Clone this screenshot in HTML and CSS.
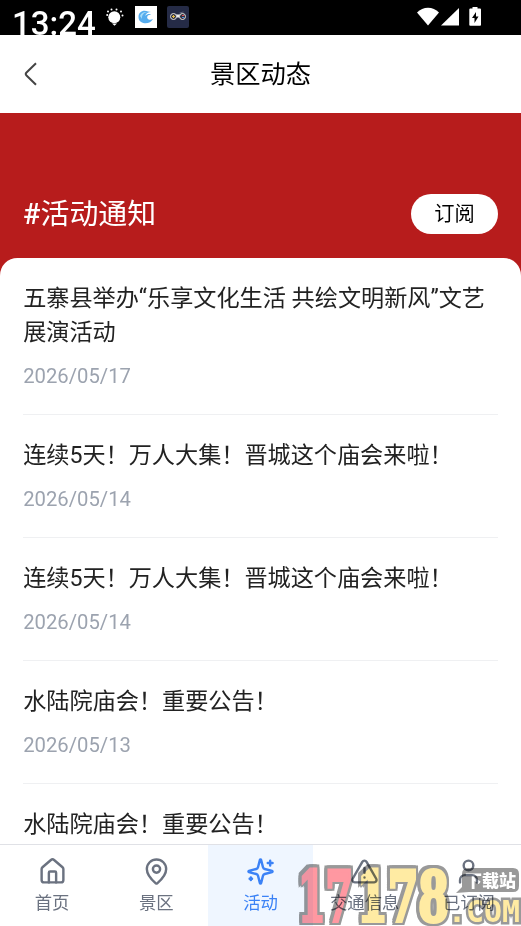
FILE: index.html
```html
<!DOCTYPE html>
<html lang="zh-CN">
<head>
<meta charset="utf-8">
<title>景区动态</title>
<link rel="stylesheet" href="styles.css">
</head>
<body>
<div class="app">
  <div class="status">
    <span class="clock">13:24</span>
    <svg class="bulb" viewBox="0 0 18 18" fill="#fff"><circle cx="8.300" cy="9.200" r="6"/><path d="M6 15.500h5l-2.500 2.300z"/><circle cx="1.200" cy="7" r="1"/><circle cx="2" cy="3.500" r="1"/><circle cx="5.500" cy="1.500" r="1"/><circle cx="10.500" cy="1.500" r="1"/><circle cx="15" cy="3.500" r="1"/><circle cx="16.500" cy="7.500" r="1"/></svg>
    <svg class="wave" viewBox="0 0 22 22"><path fill="#fff" d="M0 0h22v22H0z"/><path d="M3.500 11C3.500 6 8 3.500 13 5.500L16 6c-3 0-5 1.500-6 4 2-2 4.500-2.500 6-1.500-3 .2-4.500 2-3.500 4 1 1.600 3.500 1.700 5.500.5-1.500 3-5 4.700-8.500 4.300C6 16.800 3.500 14.500 3.500 11z" fill="#55acee"/><path d="M5 10c1-3 4-4.500 7-4-4 1-5.500 4-5 7" fill="#a6dbf7"/></svg>
    <svg class="game" viewBox="0 0 22 22"><rect width="22" height="22" rx="2" fill="#252b46"/><path d="M8 10h6" stroke="#eee" stroke-width="3"/><circle cx="6.500" cy="10.500" r="3" fill="#30303d" stroke="#e4e1df"/><circle cx="15.500" cy="10.500" r="3" fill="#30303d" stroke="#e4e1df"/><path d="M5 10.500h3M6.500 9v3" stroke="#e5bd48"/><path d="M15 9.500h2" stroke="#e4515d"/><path d="M15 11.500h2" stroke="#508de0"/><path d="M12.500 7l4-1" stroke="#777b92" stroke-width=".7"/></svg>
    <svg class="signals" viewBox="0 0 66 20" fill="#fff"><path d="M0 5.500C6-1 16-1 22 5.500L11 18.500z"/><path d="M42 1v17.500H24z"/><path fill-rule="evenodd" d="M55.500 0h5v1.500H63q1 0 1 1V18q0 .8-1 .8H53.300q-1 0-1-.8V2.500q0-1 1-1h2.200zM59 5l-4 6h2.500v5l4-6.500H59z"/></svg>
  </div>
  <header class="topbar">
    <svg class="back" viewBox="0 0 14 24"><path d="M12 1.200L2.500 10.500Q1 12 2.500 13.500L12 22.800"/></svg>
    <h1>景区动态</h1>
  </header>
  <section class="hero">
    <h2><b>#</b>活动通知</h2>
    <button class="subscribe">订阅</button>
  </section>
  <main class="list">
    <article><h3>五寨县举办“乐享文化生活 共绘文明新风”文艺展演活动</h3><time>2026/05/17</time></article>
    <article><h3>连续5天！万人大集！晋城这个庙会来啦！</h3><time>2026/05/14</time></article>
    <article><h3>连续5天！万人大集！晋城这个庙会来啦！</h3><time>2026/05/14</time></article>
    <article><h3>水陆院庙会！重要公告！</h3><time>2026/05/13</time></article>
    <article><h3>水陆院庙会！重要公告！</h3></article>
  </main>
  <nav class="tabs">
    <a class="tab"><svg viewBox="0 0 24 24"><path d="M3 10a2 2 0 0 1 .7-1.500l7-6a2 2 0 0 1 2.600 0l7 6A2 2 0 0 1 21 10v9a2 2 0 0 1-2 2H5a2 2 0 0 1-2-2z"/><path d="M15 21v-8a1 1 0 0 0-1-1h-4a1 1 0 0 0-1 1v8"/></svg><span>首页</span></a>
    <a class="tab"><svg viewBox="0 0 24 24"><path d="M20 10c0 5-5.500 10.200-7.400 11.800a1 1 0 0 1-1.200 0C9.500 20.200 4 15 4 10a8 8 0 0 1 16 0"/><circle cx="12" cy="10" r="3"/></svg><span>景区</span></a>
    <a class="tab active"><svg viewBox="0 0 24 24"><path d="M9.940 15.500A2 2 0 0 0 8.500 14.060l-6.140-1.580a.5.5 0 0 1 0-.96L8.500 9.940A2 2 0 0 0 9.940 8.500l1.580-6.140a.5.5 0 0 1 .96 0l1.580 6.140a2 2 0 0 0 1.440 1.440l6.140 1.580a.5.5 0 0 1 0 .96l-6.140 1.580a2 2 0 0 0-1.440 1.440l-1.580 6.140a.5.5 0 0 1-.96 0zM20 3v4M22 5h-4M4 17v2M5 18H3"/></svg><span>活动</span></a>
    <a class="tab"><svg viewBox="0 0 24 24"><path d="m21.700 18-8-14a2 2 0 0 0-3.500 0l-8 14A2 2 0 0 0 4 21h16a2 2 0 0 0 1.700-3M12 9v4M12 17h.01"/></svg><span>交通信息</span></a>
    <a class="tab"><svg viewBox="0 0 24 24"><circle cx="12" cy="7" r="4"/><path d="M19 21v-2a4 4 0 0 0-4-4H9a4 4 0 0 0-4 4v2"/></svg><span>已订阅</span></a>
  </nav>
  <svg class="watermark" viewBox="0 0 223 62">
    <path class="bubble" d="M170 4h45q6 0 6 6v12q0 6-6 6h-44l-13 1 6-6V10q0-6 6-6z"/>
    <g class="digits">
      <text class="red" x="0" y="57" textLength="55" lengthAdjust="spacingAndGlyphs">17</text>
      <text class="yellow" x="59" y="57" textLength="92" lengthAdjust="spacingAndGlyphs">178</text>
    </g>
    <text class="com" x="150" y="58" textLength="72" lengthAdjust="spacingAndGlyphs">.COM</text>
    <text class="site" x="167" y="23" textLength="51" lengthAdjust="spacingAndGlyphs">下载站</text>
  </svg>
</div>
</body>
</html>
```

FILE: styles.css
```css
* { box-sizing: border-box; }
body { margin: 0; font-family: Roboto, "Noto Sans CJK SC", sans-serif; background: #fff; }
h1, h2, h3 { margin: 0; font-weight: 400; }
.app { position: relative; width: 521px; height: 926px; overflow: hidden; display: flex; flex-direction: column; }
.status { height: 35px; flex: none; background: #000; display: flex; align-items: flex-start; padding: 0 40px 0 12px; overflow: hidden; }
.clock { color: #fff; font-size: 33px; font-weight: 500; line-height: 39px; margin-top: 4px; width: 94px; }
.bulb { width: 18px; height: 18px; margin-top: 8px; }
.wave { width: 22px; height: 22px; margin: 6px 0 0 11px; }
.game { width: 22px; height: 22px; margin: 6px 0 0 10px; }
.signals { width: 66px; height: 20px; margin: 7px -2px 0 auto; }
.topbar { height: 78px; flex: none; display: grid; grid-template-columns: 50px 1fr 50px; align-items: center; }
.back { width: 14px; height: 24px; margin-left: 23.500px; fill: none; stroke: #444; stroke-width: 2; }
.topbar h1 { font-size: 25.3px; line-height: 38px; text-align: center; color: #000; padding-top: 1px; }
.hero { height: 164px; flex: none; background: #b71c1c; display: flex; justify-content: space-between; align-items: flex-start; padding: 81px 23px 0; }
.hero h2 { color: #fff; font-size: 28.94px; line-height: 40px; font-weight: 400; }
.hero b { font-weight: 500; }
.subscribe { width: 87px; height: 40px; border: 0; border-radius: 20px; background: #fff; color: #000; font: 20.260px/36px Roboto, "Noto Sans CJK SC", sans-serif; padding: 0; }
.list { flex: 1; min-height: 0; overflow: hidden; margin-top: -19.500px; border-radius: 17.400px 17.400px 0 0; background: #fff; padding: 0 23.150px; }
.list article { padding: 24.150px 0 23.600px; border-bottom: 1px solid #eff0f2; }
.list h3 { font-size: 23.150px; line-height: 34.730px; color: #222; }
.list time { display: block; margin-top: 10.580px; font-size: 20.260px; line-height: 28.940px; color: #9ca3af; }
.tabs { height: 82.500px; flex: none; display: flex; border-top: 1.447px solid #e0e1e6; background: #fff; }
.tab { flex: 1; display: flex; flex-direction: column; align-items: center; padding-top: 12px; color: #6b7280; font-size: 17.360px; line-height: 24px; white-space: nowrap; }
.tab svg { width: 29px; height: 29px; margin-bottom: 5px; fill: none; stroke: currentColor; stroke-width: 2; stroke-linecap: round; stroke-linejoin: round; }
.tab.active { background: #eff6ff; color: #3b82f6; }
.watermark { position: absolute; left: 298px; top: 864px; width: 223px; height: 62px; opacity: .75; mix-blend-mode: multiply; }
.digits { filter: drop-shadow(2.500px 0 0 #777) drop-shadow(-2.500px 0 0 #777) drop-shadow(0 2.500px 0 #777) drop-shadow(0 -2.500px 0 #777); }
.digits text { font: 700 70px "DejaVu Serif", serif; stroke-width: 4px; }
.red { fill: #ff7582; stroke: #ff7582; }
.yellow { fill: #ffe484; stroke: #ffe484; }
.com { font: 700 31px "DejaVu Sans Mono", monospace; fill: #ffe484; stroke: #777; stroke-width: 5px; paint-order: stroke; }
.bubble { fill: #777; }
.site { font: 900 17px "Noto Sans CJK SC", sans-serif; fill: #fff; }
```
